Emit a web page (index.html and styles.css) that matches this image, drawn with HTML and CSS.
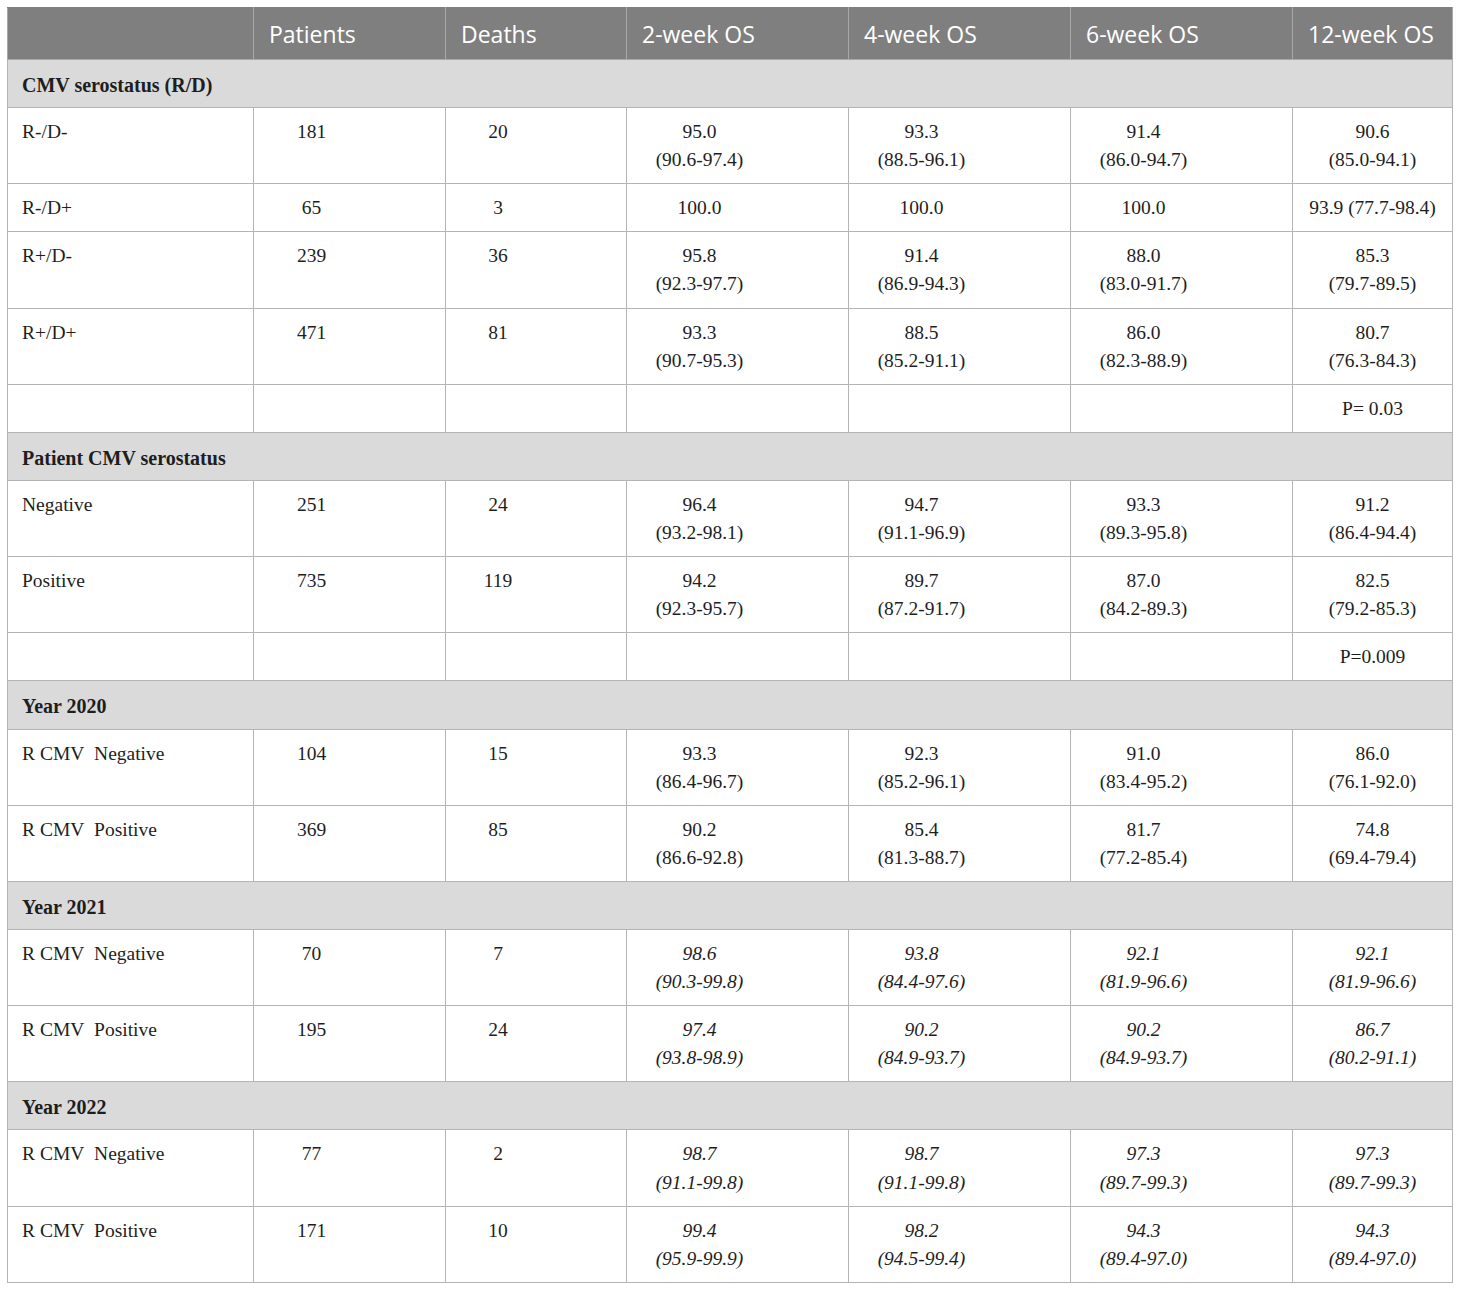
FILE: index.html
```html
<!DOCTYPE html>
<html>
<head>
<meta charset="utf-8">
<link rel="stylesheet" href="styles.css">
</head>
<body>
<table class="os-table">
  <colgroup>
    <col class="c-label"><col class="c-pat"><col class="c-death"><col class="c-wk"><col class="c-wk"><col class="c-wk"><col class="c-last">
  </colgroup>
  <thead>
    <tr>
      <th></th><th>Patients</th><th>Deaths</th><th>2-week OS</th><th>4-week OS</th><th>6-week OS</th><th>12-week OS</th>
    </tr>
  </thead>
  <tbody>
    <tr class="section"><td colspan="7">CMV serostatus (R/D)</td></tr>
    <tr><td class="lbl">R-/D-</td><td class="num">181</td><td class="num">20</td><td class="num">95.0<br>(90.6-97.4)</td><td class="num">93.3<br>(88.5-96.1)</td><td class="num">91.4<br>(86.0-94.7)</td><td class="num last">90.6<br>(85.0-94.1)</td></tr>
    <tr><td class="lbl">R-/D+</td><td class="num">65</td><td class="num">3</td><td class="num">100.0</td><td class="num">100.0</td><td class="num">100.0</td><td class="num last">93.9 (77.7-98.4)</td></tr>
    <tr><td class="lbl">R+/D-</td><td class="num">239</td><td class="num">36</td><td class="num">95.8<br>(92.3-97.7)</td><td class="num">91.4<br>(86.9-94.3)</td><td class="num">88.0<br>(83.0-91.7)</td><td class="num last">85.3<br>(79.7-89.5)</td></tr>
    <tr><td class="lbl">R+/D+</td><td class="num">471</td><td class="num">81</td><td class="num">93.3<br>(90.7-95.3)</td><td class="num">88.5<br>(85.2-91.1)</td><td class="num">86.0<br>(82.3-88.9)</td><td class="num last">80.7<br>(76.3-84.3)</td></tr>
    <tr><td class="lbl"></td><td class="num"></td><td class="num"></td><td class="num"></td><td class="num"></td><td class="num"></td><td class="num last">P= 0.03</td></tr>
    <tr class="section"><td colspan="7">Patient CMV serostatus</td></tr>
    <tr><td class="lbl">Negative</td><td class="num">251</td><td class="num">24</td><td class="num">96.4<br>(93.2-98.1)</td><td class="num">94.7<br>(91.1-96.9)</td><td class="num">93.3<br>(89.3-95.8)</td><td class="num last">91.2<br>(86.4-94.4)</td></tr>
    <tr><td class="lbl">Positive</td><td class="num">735</td><td class="num">119</td><td class="num">94.2<br>(92.3-95.7)</td><td class="num">89.7<br>(87.2-91.7)</td><td class="num">87.0<br>(84.2-89.3)</td><td class="num last">82.5<br>(79.2-85.3)</td></tr>
    <tr><td class="lbl"></td><td class="num"></td><td class="num"></td><td class="num"></td><td class="num"></td><td class="num"></td><td class="num last">P=0.009</td></tr>
    <tr class="section"><td colspan="7">Year 2020</td></tr>
    <tr><td class="lbl">R CMV&nbsp; Negative</td><td class="num">104</td><td class="num">15</td><td class="num">93.3<br>(86.4-96.7)</td><td class="num">92.3<br>(85.2-96.1)</td><td class="num">91.0<br>(83.4-95.2)</td><td class="num last">86.0<br>(76.1-92.0)</td></tr>
    <tr><td class="lbl">R CMV&nbsp; Positive</td><td class="num">369</td><td class="num">85</td><td class="num">90.2<br>(86.6-92.8)</td><td class="num">85.4<br>(81.3-88.7)</td><td class="num">81.7<br>(77.2-85.4)</td><td class="num last">74.8<br>(69.4-79.4)</td></tr>
    <tr class="section"><td colspan="7">Year 2021</td></tr>
    <tr><td class="lbl">R CMV&nbsp; Negative</td><td class="num">70</td><td class="num">7</td><td class="num it">98.6<br>(90.3-99.8)</td><td class="num it">93.8<br>(84.4-97.6)</td><td class="num it">92.1<br>(81.9-96.6)</td><td class="num last it">92.1<br>(81.9-96.6)</td></tr>
    <tr><td class="lbl">R CMV&nbsp; Positive</td><td class="num">195</td><td class="num">24</td><td class="num it">97.4<br>(93.8-98.9)</td><td class="num it">90.2<br>(84.9-93.7)</td><td class="num it">90.2<br>(84.9-93.7)</td><td class="num last it">86.7<br>(80.2-91.1)</td></tr>
    <tr class="section"><td colspan="7">Year 2022</td></tr>
    <tr><td class="lbl">R CMV&nbsp; Negative</td><td class="num">77</td><td class="num">2</td><td class="num it">98.7<br>(91.1-99.8)</td><td class="num it">98.7<br>(91.1-99.8)</td><td class="num it">97.3<br>(89.7-99.3)</td><td class="num last it">97.3<br>(89.7-99.3)</td></tr>
    <tr><td class="lbl">R CMV&nbsp; Positive</td><td class="num">171</td><td class="num">10</td><td class="num it">99.4<br>(95.9-99.9)</td><td class="num it">98.2<br>(94.5-99.4)</td><td class="num it">94.3<br>(89.4-97.0)</td><td class="num last it">94.3<br>(89.4-97.0)</td></tr>
  </tbody>
</table>
</body>
</html>
```

FILE: styles.css
```css
html, body {
  margin: 0;
  padding: 0;
  background: #ffffff;
}
body {
  padding: 7px;
}
.os-table {
  border-collapse: collapse;
  table-layout: fixed;
  width: 1446px;
  font-family: "Liberation Serif", "Times New Roman", serif;
  font-size: 19.5px;
  color: #1e1e1e;
  border: 1px solid #a8a8a8;
}
.c-label { width: 246px; }
.c-pat { width: 192px; }
.c-death { width: 181px; }
.c-wk { width: 222px; }
.c-last { width: 160px; }

.os-table th {
  background: #7f7f7f;
  color: #ffffff;
  font-family: "Open Sans", "Noto Sans", sans-serif;
  font-weight: normal;
  font-size: 23px;
  text-align: left;
  line-height: 30px;
  padding: 11px 0 10px 15px;
  border: 1px solid #a8a8a8;
  border-top-color: #7f7f7f;
  white-space: nowrap;
}
.os-table td {
  border: 1px solid #b4b4b4;
  line-height: 28.1px;
  padding: 10px 0 9px 15px;
  vertical-align: top;
}
.os-table td.lbl {
  padding-left: 14px;
}
.os-table td.num {
  text-align: center;
  padding-right: 91px;
}
.os-table td.num.last {
  padding-right: 15px;
  white-space: nowrap;
}
.os-table td.it {
  font-style: italic;
}
.os-table tr.section td {
  background: #dadada;
  font-weight: bold;
  font-size: 20px;
  padding: 11px 0 8px 14px;
}
```
